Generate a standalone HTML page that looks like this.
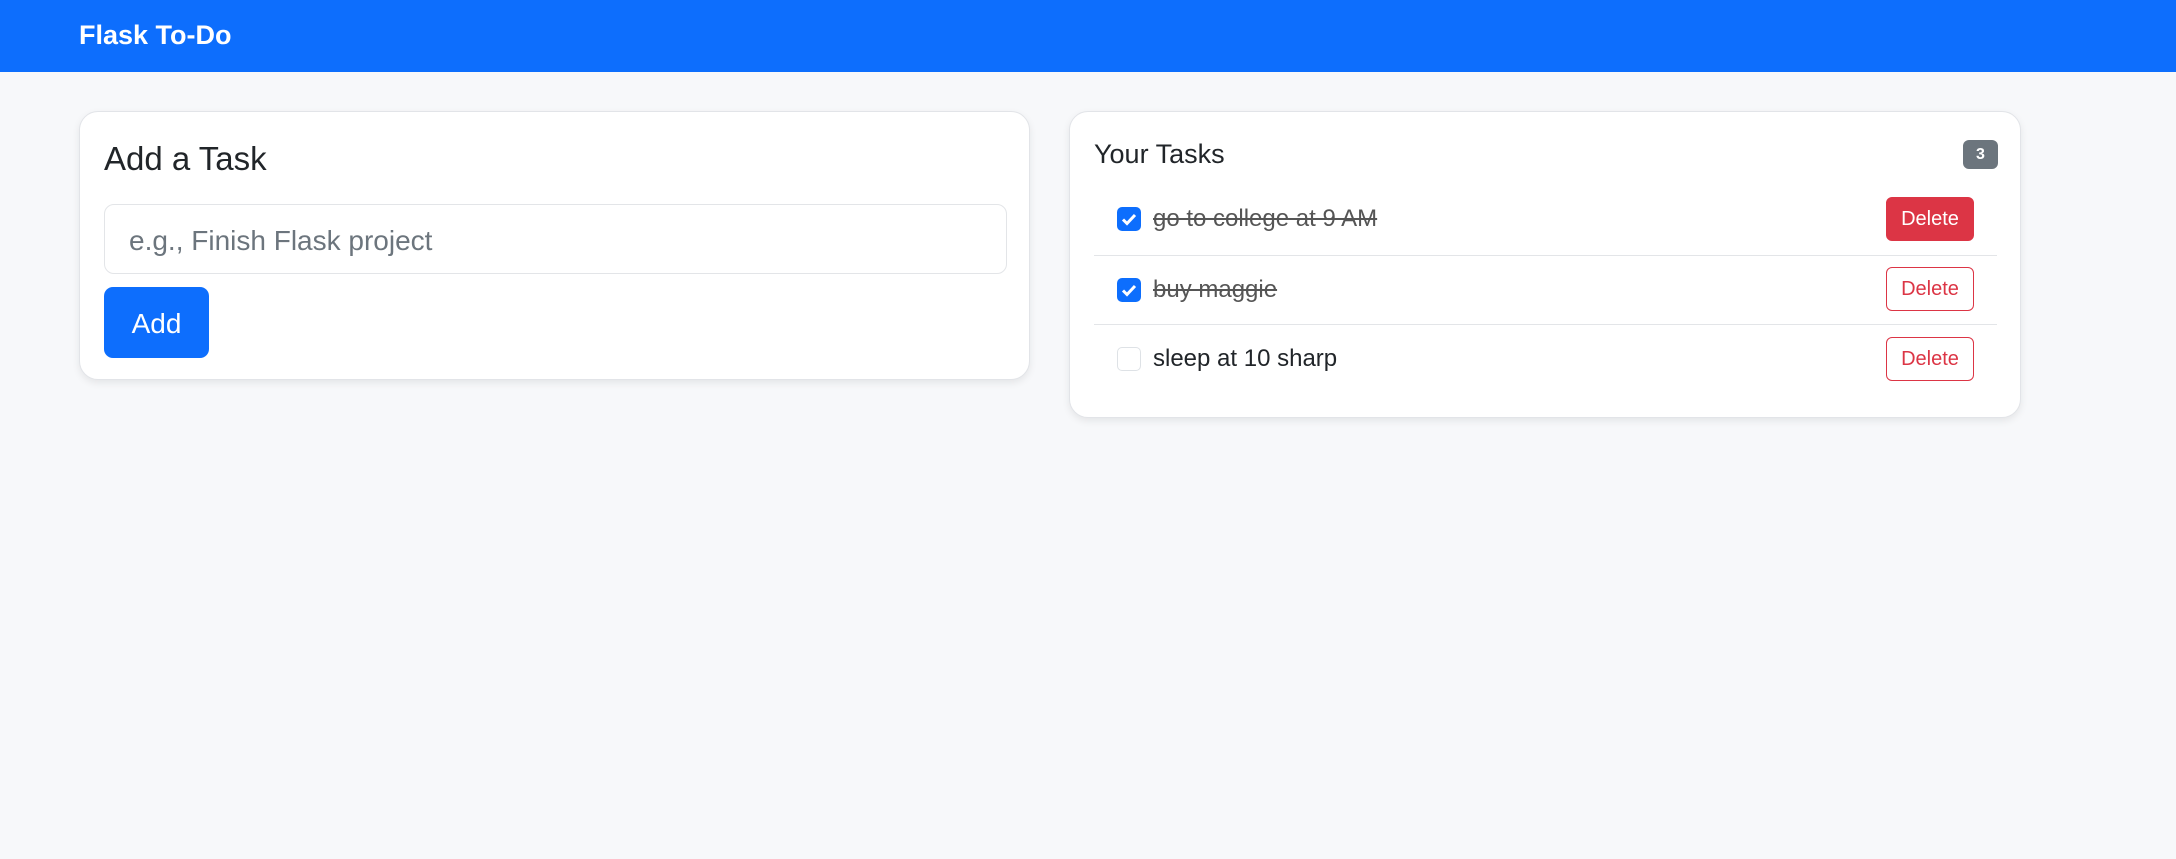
<!DOCTYPE html>
<html><head><meta charset="utf-8"><style>
*{box-sizing:border-box;margin:0;padding:0}
body{width:2176px;height:859px;background:#f7f8fa;font-family:"Liberation Sans",sans-serif;color:#212529;position:relative;overflow:hidden}
.nav{position:absolute;left:0;top:0;width:2176px;height:72px;background:#0d6efd}
.brand{position:absolute;left:79px;top:20px;color:#fff;font-size:27px;font-weight:bold}
.card{position:absolute;background:#fff;border:1px solid #e2e4e8;border-radius:19px;box-shadow:0 3px 8px rgba(0,0,0,.08)}
.abs{position:absolute}
.input{position:absolute;left:24px;top:92px;width:903px;height:70px;border:1px solid #e3e5e8;border-radius:10px;color:#6c757d;font-size:28px;padding:20px 0 0 24px}
.add{position:absolute;left:24px;top:175px;width:105px;height:71px;background:#0d6efd;border-radius:9px;color:#fff;font-size:28px;text-align:center;line-height:73px}
.cb{position:absolute;left:47px;width:24px;height:24px;border-radius:5px;background:#0d6efd}
.cb.off{background:#fff;border:1px solid #dee2e6}
.txt{position:absolute;left:83px;font-size:24px}
.done{color:#555;text-decoration:line-through}
.del{position:absolute;left:816px;width:88px;height:44px;border:1px solid #dc3545;border-radius:6px;color:#dc3545;font-size:20px;text-align:center;line-height:42px}
.del.on{background:#dc3545;color:#fff}
.hr{position:absolute;left:24px;width:903px;height:1px;background:#e3e5e8}
</style></head><body>
<div class="nav"><div class="brand">Flask To-Do</div></div>
<div class="card" style="left:79px;top:111px;width:951px;height:269px">
 <div class="abs" style="left:24px;top:28px;font-size:33px">Add a Task</div>
 <div class="input">e.g., Finish Flask project</div>
 <div class="add">Add</div>
</div>
<div class="card" style="left:1069px;top:111px;width:952px;height:307px">
 <div class="abs" style="left:24px;top:27px;font-size:27px">Your Tasks</div>
 <div class="abs" style="left:893px;top:28px;width:35px;height:29px;background:#6c757d;border-radius:6px;color:#fff;font-size:16px;font-weight:bold;text-align:center;line-height:29px">3</div>
 <div class="cb" style="top:95px"><svg width="24" height="24"><path d="M6 12.5l4 4 8-8.5" stroke="#fff" stroke-width="3" fill="none"/></svg></div>
 <div class="txt done" style="top:93px">go to college at 9 AM</div>
 <div class="del on" style="top:85px">Delete</div>
 <div class="hr" style="top:143px"></div>
 <div class="cb" style="top:166px"><svg width="24" height="24"><path d="M6 12.5l4 4 8-8.5" stroke="#fff" stroke-width="3" fill="none"/></svg></div>
 <div class="txt done" style="top:164px">buy maggie</div>
 <div class="del" style="top:155px">Delete</div>
 <div class="hr" style="top:212px"></div>
 <div class="cb off" style="top:235px"></div>
 <div class="txt" style="top:233px">sleep at 10 sharp</div>
 <div class="del" style="top:225px">Delete</div>
</div>
</body></html>
